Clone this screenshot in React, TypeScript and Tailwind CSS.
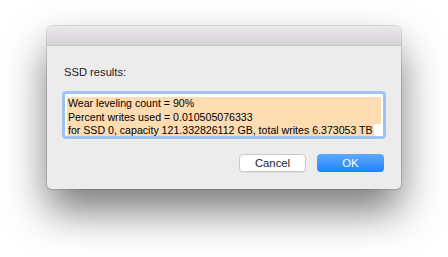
import React from "react";

export default function App() {
  return (
    <div className="w-[448px] h-[257px] bg-white pt-[26px] pl-[47px] font-['Liberation_Sans',Helvetica,Arial,sans-serif] text-[#1a1a1a]">
      {/* Alert window */}
      <div className="w-[354px] h-[163px] flex flex-col rounded-[5px] overflow-hidden bg-[#ececec] shadow-[0_0_0_1px_rgba(0,0,0,0.12),0_22px_42px_rgba(0,0,0,0.52)]">
        {/* Title bar */}
        <div className="h-[20px] shrink-0 bg-gradient-to-b from-[#ebe9eb] to-[#d5d3d5] border-b border-[#c4c2c4]" />

        {/* Body */}
        <div className="flex-1 flex flex-col px-[15px] pt-[18px]">
          <div className="pl-[2px] text-[11.2px] leading-[16px]">SSD results:</div>

          {/* Text field */}
          <div className="mt-[11px] h-[48px] rounded-[4px] border-[3px] border-[#a0c4f2] bg-white px-[2px] pt-[3px] text-[10.6px] leading-[13.6px] text-black whitespace-nowrap overflow-hidden">
            <div className="bg-[#fedcb2] pl-[1px]">Wear leveling count = 90%</div>
            <div className="bg-[#fedcb2] pl-[1px]">Percent writes used = 0.010505076333</div>
            <div>
              <span className="bg-[#fedcb2] pl-[1px] pr-[1px] inline-block">
                for SSD 0, capacity 121.332826112 GB, total writes 6.373053 TB
              </span>
            </div>
          </div>

          {/* Buttons */}
          <div className="flex justify-end gap-[11px] mt-[15px] pr-[2px]">
            <button className="w-[67px] h-[18px] rounded-[4px] bg-white border border-[#c9c9c9] shadow-[0_1px_0_rgba(0,0,0,0.06)] text-[11.3px] leading-[16px] text-[#222]">
              Cancel
            </button>
            <button className="w-[67px] h-[18px] rounded-[4px] bg-gradient-to-b from-[#5eaafd] to-[#1882fb] text-[11.3px] leading-[16px] text-white">
              OK
            </button>
          </div>
        </div>
      </div>
    </div>
  );
}
